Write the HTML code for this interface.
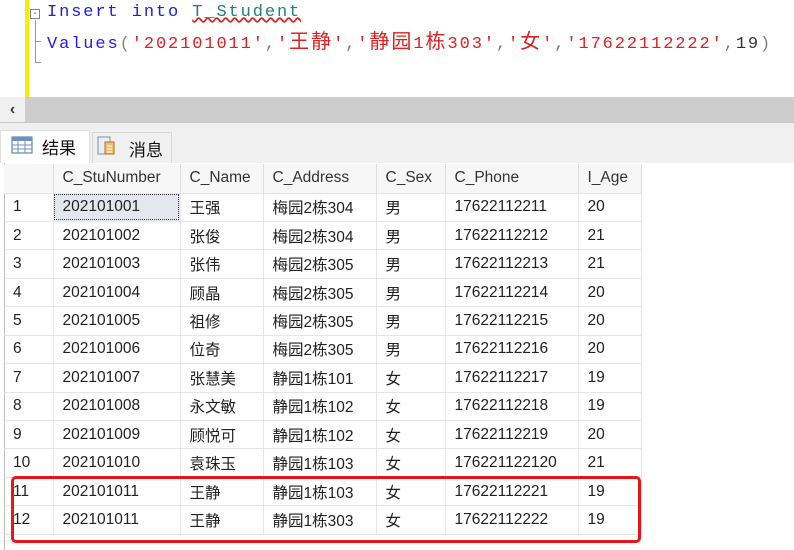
<!DOCTYPE html>
<html><head><meta charset="utf-8"><style>
*{margin:0;padding:0;box-sizing:border-box}
body{width:794px;height:550px;overflow:hidden;background:#fff;position:relative;font-family:"Liberation Sans","Noto Sans CJK SC",sans-serif}
.abs{position:absolute}
.code{font-family:"Liberation Mono","Noto Sans CJK SC",monospace;font-size:17px;letter-spacing:1.9px;white-space:pre;line-height:24px}
.code .c{font-size:20px;letter-spacing:2px}
.kw{color:#2020e0}.s{color:#e02020}.t{color:#208080}.g{color:#808080}
table{border-collapse:collapse;position:absolute;left:4px;top:164px;font-size:15.5px;color:#222}
td{height:28.45px;border-right:1px solid #e6e6e6;border-bottom:1px solid #e6e6e6;padding-left:9px;white-space:nowrap}
tr.h td{height:29px;background:#f7f7f7;color:#333;border-right:1px solid #ddd}
td.n{padding-left:9px}
</style></head><body>
<div class="abs" style="left:25px;top:0;width:4px;height:97px;background:#f0f000"></div>
<div class="abs" style="left:30px;top:9px;width:10px;height:10px;border:1px solid #888;font-size:10px;line-height:7px;text-align:center;color:#555">-</div>
<div class="abs" style="left:35px;top:20px;width:1px;height:42px;background:#999"></div>
<div class="abs" style="left:35px;top:41px;width:6px;height:1px;background:#999"></div>
<div class="abs" style="left:35px;top:62px;width:6px;height:1px;background:#999"></div>
<div class="abs code" style="left:47px;top:1px"><span class="kw">Insert into </span><span class="t" style="text-decoration:underline wavy #e02020">T_Student</span></div>
<div class="abs code" style="left:47px;top:32px"><span class="kw">Values</span><span class="g">(</span><span class="s">'202101011'</span><span class="g">,</span><span class="s">'<span class="c">王静</span>'</span><span class="g">,</span><span class="s">'<span class="c">静园</span>1<span class="c">栋</span>303'</span><span class="g">,</span><span class="s">'<span class="c">女</span>'</span><span class="g">,</span><span class="s">'17622112222'</span><span class="g">,</span><span style="color:#333">19</span><span class="g">)</span></div>
<div class="abs" style="left:0;top:97px;width:794px;height:25px;background:#cdcdcd"></div>
<div class="abs" style="left:0;top:97px;width:25px;height:25px;background:#f0f0f0;font-size:16px;line-height:25px;text-align:center;color:#333;font-weight:bold">‹</div>
<div class="abs" style="left:0;top:122px;width:794px;height:41px;background:#f0f0f0;border-top:1px solid #c8c8c8"></div>
<div class="abs" style="left:0;top:130px;width:90px;height:33px;background:#fff;border:1px solid #e0e0e0;border-bottom:none"></div>
<div class="abs" style="left:92px;top:132px;width:80px;height:31px;background:#f0f0f0;border:1px solid #d8d8d8;border-bottom:none"></div>
<svg class="abs" style="left:11px;top:136px" width="22" height="18"><rect x="1" y="1" width="20" height="16" fill="#fff" stroke="#4a6a9a"/><rect x="1" y="1" width="20" height="4" fill="#6d8fc5"/><path d="M1 9H21M1 13H21M7 5V17M14 5V17" stroke="#6d8fc5"/></svg>
<div class="abs" style="left:42px;top:134px;font-size:17px;color:#111">结果</div>
<svg class="abs" style="left:97px;top:136px" width="22" height="20"><rect x="1" y="1" width="12" height="17" fill="#e8eef8" stroke="#7890b0"/><rect x="8" y="6" width="9" height="12" fill="#f3c06a" stroke="#b07020"/><path d="M10 10h5M10 13h5M10 16h5" stroke="#fff"/></svg>
<div class="abs" style="left:129px;top:136px;font-size:17px;color:#111">消息</div>
<div class="abs" style="left:4px;top:163px;width:1px;height:387px;background:#bbb"></div>
<table>
<colgroup><col style="width:49px"><col style="width:127px"><col style="width:83px"><col style="width:113px"><col style="width:69px"><col style="width:133px"><col style="width:63px"></colgroup>
<tr class="h"><td></td><td>C_StuNumber</td><td>C_Name</td><td>C_Address</td><td>C_Sex</td><td>C_Phone</td><td>I_Age</td></tr>
<tr><td class="n">1</td><td style="background:#e4e8ee;outline:1px dotted #333;outline-offset:-2px">202101001</td><td>王强</td><td>梅园2栋304</td><td>男</td><td>17622112211</td><td>20</td></tr>
<tr><td class="n">2</td><td>202101002</td><td>张俊</td><td>梅园2栋304</td><td>男</td><td>17622112212</td><td>21</td></tr>
<tr><td class="n">3</td><td>202101003</td><td>张伟</td><td>梅园2栋305</td><td>男</td><td>17622112213</td><td>21</td></tr>
<tr><td class="n">4</td><td>202101004</td><td>顾晶</td><td>梅园2栋305</td><td>男</td><td>17622112214</td><td>20</td></tr>
<tr><td class="n">5</td><td>202101005</td><td>祖修</td><td>梅园2栋305</td><td>男</td><td>17622112215</td><td>20</td></tr>
<tr><td class="n">6</td><td>202101006</td><td>位奇</td><td>梅园2栋305</td><td>男</td><td>17622112216</td><td>20</td></tr>
<tr><td class="n">7</td><td>202101007</td><td>张慧美</td><td>静园1栋101</td><td>女</td><td>17622112217</td><td>19</td></tr>
<tr><td class="n">8</td><td>202101008</td><td>永文敏</td><td>静园1栋102</td><td>女</td><td>17622112218</td><td>19</td></tr>
<tr><td class="n">9</td><td>202101009</td><td>顾悦可</td><td>静园1栋102</td><td>女</td><td>17622112219</td><td>20</td></tr>
<tr><td class="n">10</td><td>202101010</td><td>袁珠玉</td><td>静园1栋103</td><td>女</td><td>176221122120</td><td>21</td></tr>
<tr><td class="n">11</td><td>202101011</td><td>王静</td><td>静园1栋103</td><td>女</td><td>17622112221</td><td>19</td></tr>
<tr><td class="n">12</td><td>202101011</td><td>王静</td><td>静园1栋303</td><td>女</td><td>17622112222</td><td>19</td></tr>
</table>
<div class="abs" style="left:11px;top:476px;width:630px;height:67px;border:3px solid #e8141c;border-radius:5px"></div>
</body></html>
